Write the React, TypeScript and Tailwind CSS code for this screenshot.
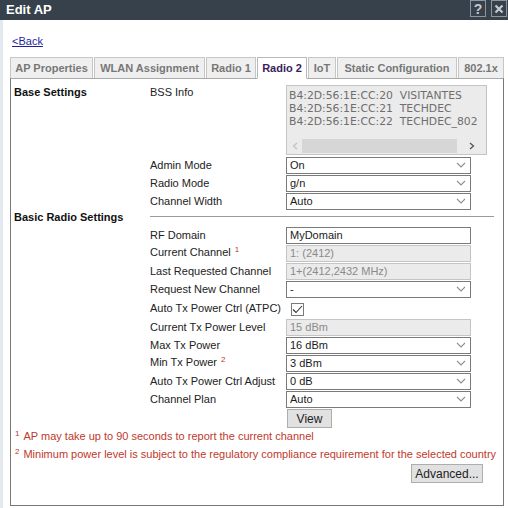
import React from "react";

const Chevron = () => (
  <svg width="10" height="6" viewBox="0 0 10 6" className="shrink-0">
    <path d="M1 1 L5 5 L9 1" fill="none" stroke="#8f8f8f" strokeWidth="1.1" />
  </svg>
);

const Select = ({ value }: { value: string }) => (
  <div className="h-[17px] w-[185px] border border-[#7a7a7a] bg-white flex items-center justify-between pl-[3px] pr-[4px] text-[#1a1a1a]">
    <span className="leading-[15px]">{value}</span>
    <Chevron />
  </div>
);

const Input = ({ value, disabled }: { value: string; disabled?: boolean }) =>
  disabled ? (
    <div className="h-[17px] w-[185px] border border-[#c4c4c4] bg-[#ebebeb] flex items-center pl-[3px] text-[#8a8a8a]">
      <span className="leading-[15px]">{value}</span>
    </div>
  ) : (
    <div className="h-[17px] w-[185px] border border-[#7a7a7a] bg-white flex items-center pl-[3px] text-[#1a1a1a]">
      <span className="leading-[15px]">{value}</span>
    </div>
  );

const Sup = ({ n }: { n: string }) => (
  <span className="text-[#c0392b] text-[8px] relative top-[-4px] ml-[4px]">{n}</span>
);

const Row = ({
  label,
  sup,
  children,
  tall,
}: {
  label: string;
  sup?: string;
  children: React.ReactNode;
  tall?: boolean;
}) => (
  <div className={tall ? "flex items-center h-[20px]" : "flex items-center h-[18px]"}>
    <div className="w-[136px] shrink-0 text-[#222] leading-[14px] whitespace-nowrap">
      {label}
      {sup && <Sup n={sup} />}
    </div>
    <div className="w-[185px]">{children}</div>
  </div>
);

const Tab = ({ label, w, active }: { label: string; w: string; active?: boolean }) => (
  <div
    className={
      active
        ? `${w} h-[22px] -mb-px border border-[#b9b9b9] border-b-white bg-white flex items-center justify-center font-bold text-[#3b1d5c]`
        : `${w} h-[21px] border border-[#c6c6c6] border-b-0 bg-[#efefef] flex items-center justify-center font-bold text-[#777]`
    }
  >
    {label}
  </div>
);

export default function App() {
  return (
    <div
      className="w-[508px] h-[508px] bg-white overflow-hidden text-[11px]"
      style={{ fontFamily: '"Liberation Sans", Arial, sans-serif' }}
    >
      {/* Title bar */}
      <div className="h-[20px] bg-[#36414c] flex items-center justify-between pl-[6px] pr-[1px]">
        <span className="text-white font-bold text-[13px] leading-[20px]">Edit AP</span>
        <div className="flex gap-[5px] items-start self-start">
          <div className="w-[16px] h-[17px] border border-[#8d969f] flex items-center justify-center text-[#c3c9cf] font-bold text-[14px] leading-none">
            ?
          </div>
          <div className="w-[16px] h-[17px] border border-[#8d969f] flex items-center justify-center">
            <svg width="10" height="10" viewBox="0 0 10 10">
              <path d="M1.5 1.5 L8.5 8.5 M8.5 1.5 L1.5 8.5" stroke="#c3c9cf" strokeWidth="2.2" />
            </svg>
          </div>
        </div>
      </div>

      <div className="flex">
        <div className="w-[3px] h-[488px] bg-[#e3eaef] shrink-0" />
        <div className="flex-1">
          {/* Back link */}
          <div className="h-[37px] pt-[13px] pl-[9px]">
            <a className="text-[#1f1f9e] underline leading-[14px]" href="#">
              &lt;Back
            </a>
          </div>

          {/* Tabs */}
          <div className="flex items-end gap-[1px] pl-[7px] relative z-10">
            <Tab label="AP Properties" w="w-[83px]" />
            <Tab label="WLAN Assignment" w="w-[111px]" />
            <Tab label="Radio 1" w="w-[50px]" />
            <Tab label="Radio 2" w="w-[50px]" active />
            <Tab label="IoT" w="w-[28px]" />
            <Tab label="Static Configuration" w="w-[120px]" />
            <Tab label="802.1x" w="w-[46px]" />
          </div>

          {/* Panel */}
          <div className="ml-[7px] w-[494px] h-[428px] border border-[#777] border-t-[#a9a9a9] pl-[3px] pt-[6px] flex flex-col">
            {/* Base settings */}
            <div className="flex">
              <div className="w-[136px] shrink-0 font-bold text-[#111] leading-[14px]">Base Settings</div>
              <div className="flex flex-col">
                <div className="flex">
                  <div className="w-[136px] shrink-0 text-[#222] leading-[14px]">BSS Info</div>
                  <div
                    className="w-[201px] h-[70px] border border-[#c4c4c4] bg-[#ebebeb] flex flex-col overflow-hidden"
                    style={{ fontFamily: '"DejaVu Sans", Verdana, sans-serif' }}
                  >
                    <div className="pl-[2px] pt-[3px] text-[10.8px] leading-[13px] text-[#6e6e6e] whitespace-pre flex-1">
                      <div>B4:2D:56:1E:CC:20  VISITANTES</div>
                      <div>B4:2D:56:1E:CC:21  TECHDEC</div>
                      <div>B4:2D:56:1E:CC:22  TECHDEC_802</div>
                    </div>
                    <div className="h-[15px] flex items-center mb-[1px]">
                      <div className="w-[15px] flex justify-center">
                        <svg width="6" height="8" viewBox="0 0 6 8">
                          <path d="M5 1 L1.5 4 L5 7" fill="none" stroke="#c2c2c2" strokeWidth="1.3" />
                        </svg>
                      </div>
                      <div className="w-[155px] h-[14px] bg-[#d6d6d6]" />
                      <div className="flex-1 flex justify-center">
                        <svg width="6" height="8" viewBox="0 0 6 8">
                          <path d="M1 1 L4.5 4 L1 7" fill="none" stroke="#555" strokeWidth="1.3" />
                        </svg>
                      </div>
                    </div>
                  </div>
                </div>
                <div className="h-[1px]" />
                <Row label="Admin Mode">
                  <Select value="On" />
                </Row>
                <Row label="Radio Mode">
                  <Select value="g/n" />
                </Row>
                <Row label="Channel Width">
                  <Select value="Auto" />
                </Row>
              </div>
            </div>

            {/* Basic radio settings */}
            <div className="flex">
              <div className="w-[136px] shrink-0 font-bold text-[#111] leading-[14px]">Basic Radio Settings</div>
              <div className="flex flex-col">
                <div className="mt-[6px] mb-[9px] w-[344px] border-t border-[#9a9a9a]" />
                <Row label="RF Domain">
                  <Input value="MyDomain" />
                </Row>
                <Row label="Current Channel" sup="1">
                  <Input value="1: (2412)" disabled />
                </Row>
                <Row label="Last Requested Channel">
                  <Input value="1+(2412,2432 MHz)" disabled />
                </Row>
                <Row label="Request New Channel">
                  <Select value="-" />
                </Row>
                <Row label="Auto Tx Power Ctrl (ATPC)" tall>
                  <div className="pl-[5px] pt-[2px]">
                    <div className="w-[13px] h-[13px] border border-[#7a7a7a] bg-white flex items-center justify-center">
                      <svg width="11" height="9" viewBox="0 0 11 9">
                        <path d="M1 4.5 L4 7.5 L10 1" fill="none" stroke="#333" strokeWidth="1.1" />
                      </svg>
                    </div>
                  </div>
                </Row>
                <Row label="Current Tx Power Level">
                  <Input value="15 dBm" disabled />
                </Row>
                <Row label="Max Tx Power">
                  <Select value="16 dBm" />
                </Row>
                <Row label="Min Tx Power" sup="2">
                  <Select value="3 dBm" />
                </Row>
                <Row label="Auto Tx Power Ctrl Adjust">
                  <Select value="0 dB" />
                </Row>
                <Row label="Channel Plan">
                  <Select value="Auto" />
                </Row>
                <div className="flex mt-[1px]">
                  <div className="w-[137px] shrink-0" />
                  <div className="w-[45px] h-[19px] border border-[#adadad] bg-[#e1e1e1] flex items-center justify-center text-[#222] text-[12px]">
                    View
                  </div>
                </div>
              </div>
            </div>

            {/* Footnotes */}
            <div className="text-[#c0392b] leading-[16px] pl-[1px]">
              <div>
                <span className="text-[8px] relative top-[-4px] mr-[4px]">1</span>AP may take up to 90 seconds to report the current channel
              </div>
              <div>
                <span className="text-[8px] relative top-[-4px] mr-[4px]">2</span>Minimum power level is subject to the regulatory compliance requirement for the selected country
              </div>
            </div>
            <div className="flex justify-end pr-[20px]">
              <div className="w-[72px] h-[19px] border border-[#adadad] bg-[#e1e1e1] flex items-center justify-center text-[#222] text-[12px]">
                Advanced...
              </div>
            </div>
          </div>
        </div>
      </div>
    </div>
  );
}
